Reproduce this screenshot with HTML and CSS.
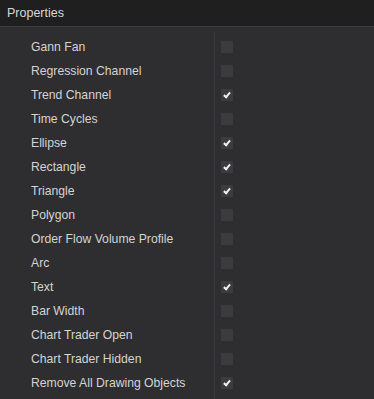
FILE: index.html
```html
<!DOCTYPE html>
<html lang="en">
<head>
    <meta charset="UTF-8">
    <title>Properties</title>
    <link rel="stylesheet" href="styles.css">
</head>
<body>
    <div class="panel">
        <div class="panel-header">Properties</div>
        <div class="props">
            <div class="prop"><span class="name">Gann Fan</span><span class="val"><span class="box"></span></span></div>
            <div class="prop"><span class="name">Regression Channel</span><span class="val"><span class="box"></span></span></div>
            <div class="prop"><span class="name">Trend Channel</span><span class="val"><span class="box checked"></span></span></div>
            <div class="prop"><span class="name">Time Cycles</span><span class="val"><span class="box"></span></span></div>
            <div class="prop"><span class="name">Ellipse</span><span class="val"><span class="box checked"></span></span></div>
            <div class="prop"><span class="name">Rectangle</span><span class="val"><span class="box checked"></span></span></div>
            <div class="prop"><span class="name">Triangle</span><span class="val"><span class="box checked"></span></span></div>
            <div class="prop"><span class="name">Polygon</span><span class="val"><span class="box"></span></span></div>
            <div class="prop"><span class="name">Order Flow Volume Profile</span><span class="val"><span class="box"></span></span></div>
            <div class="prop"><span class="name">Arc</span><span class="val"><span class="box"></span></span></div>
            <div class="prop"><span class="name">Text</span><span class="val"><span class="box checked"></span></span></div>
            <div class="prop"><span class="name">Bar Width</span><span class="val"><span class="box"></span></span></div>
            <div class="prop"><span class="name">Chart Trader Open</span><span class="val"><span class="box"></span></span></div>
            <div class="prop"><span class="name">Chart Trader Hidden</span><span class="val"><span class="box"></span></span></div>
            <div class="prop"><span class="name">Remove All Drawing Objects</span><span class="val"><span class="box checked"></span></span></div>
        </div>
    </div>
</body>
</html>
```

FILE: styles.css
```css
* {
    margin: 0;
    padding: 0;
    box-sizing: border-box;
}

body {
    width: 374px;
    height: 399px;
    background: #2e2e30;
    font-family: "Liberation Sans", Arial, sans-serif;
    font-size: 12px;
    color: #d4d4d4;
    overflow: hidden;
}

.panel {
    height: 399px;
    display: flex;
    flex-direction: column;
}

/* Header */
.panel-header {
    height: 27px;
    padding: 6px 0 0 7px;
    background: #1f1f1f;
    border-bottom: 1px solid #3d3d3f;
    color: #d8d8d8;
    font-size: 12.5px;
}

/* Property grid */
.props {
    flex: 1;
    padding-top: 8px;
    background: linear-gradient(#3b3b3e, #3b3b3e) 214px 5px / 1px 100% no-repeat, #2e2e30;
}

.prop {
    height: 24px;
    display: flex;
    align-items: center;
}

.name {
    width: 215px;
    padding-left: 31px;
    font-size: 12.2px;
}

.val {
    padding-left: 6px;
    display: flex;
    align-items: center;
}

.box {
    width: 12px;
    height: 12px;
    background: #3c3c40;
    position: relative;
}

.box.checked::after {
    content: "";
    position: absolute;
    left: 4px;
    top: 2px;
    width: 2px;
    height: 5px;
    border-right: 2px solid #f0f0f0;
    border-bottom: 2px solid #f0f0f0;
    transform: rotate(40deg);
}
```
